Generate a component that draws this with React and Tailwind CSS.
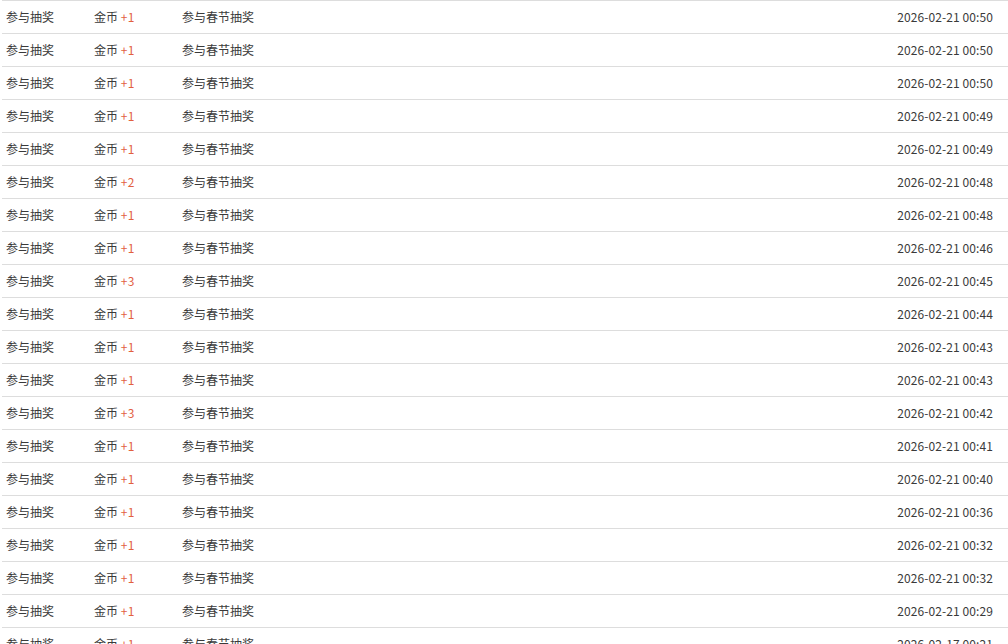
import React from "react";

const rows = [
  ["+1", "2026-02-21 00:50"],
  ["+1", "2026-02-21 00:50"],
  ["+1", "2026-02-21 00:50"],
  ["+1", "2026-02-21 00:49"],
  ["+1", "2026-02-21 00:49"],
  ["+2", "2026-02-21 00:48"],
  ["+1", "2026-02-21 00:48"],
  ["+1", "2026-02-21 00:46"],
  ["+3", "2026-02-21 00:45"],
  ["+1", "2026-02-21 00:44"],
  ["+1", "2026-02-21 00:43"],
  ["+1", "2026-02-21 00:43"],
  ["+3", "2026-02-21 00:42"],
  ["+1", "2026-02-21 00:41"],
  ["+1", "2026-02-21 00:40"],
  ["+1", "2026-02-21 00:36"],
  ["+1", "2026-02-21 00:32"],
  ["+1", "2026-02-21 00:32"],
  ["+1", "2026-02-21 00:29"],
  ["+1", "2026-02-17 00:21"],
];

export default function App() {
  return (
    <div
      className="w-[1008px] h-[644px] overflow-hidden bg-white text-[12px] text-[#3a3a3a]"
      style={{ fontFamily: '"Microsoft YaHei", "Noto Sans CJK SC", sans-serif' }}
    >
      <div className="ml-[2px] border-t border-[#ddd]">
        {rows.map((r, i) => (
          <div
            key={i}
            className="h-[33px] flex items-center border-b border-[#ddd] pl-[4px] pr-[15px]"
          >
            <div className="w-[88px]">参与抽奖</div>
            <div className="w-[88px]">
              金币 <span className="text-[#e2603f] tracking-[0.5px]">{r[0]}</span>
            </div>
            <div className="flex-1">参与春节抽奖</div>
            <div className="tracking-[0.1px]">{r[1]}</div>
          </div>
        ))}
      </div>
    </div>
  );
}
